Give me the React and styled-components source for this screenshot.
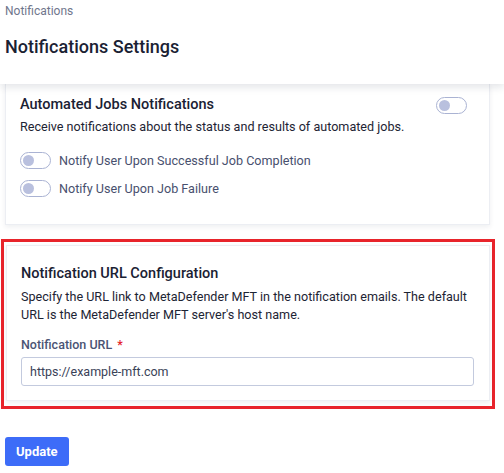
import React, { useState } from 'react';
import styled, { createGlobalStyle } from 'styled-components';

const GlobalStyle = createGlobalStyle`
  body {
    margin: 0;
    background: #ffffff;
    font-family: Roboto, 'Liberation Sans', Arial, sans-serif;
    color: #1d2434;
  }
  * { box-sizing: border-box; }
`;

const Page = styled.div`
  width: 504px;
  height: 473px;
  overflow: hidden;
  background: #ffffff;
`;

const Header = styled.header`
  position: relative;
  z-index: 2;
  height: 84px;
  padding: 3px 5px 0;
  background: #ffffff;
  box-shadow: 0 3px 8px rgba(20, 30, 60, 0.12);
`;

const Breadcrumb = styled.div`
  font-size: 12px;
  line-height: 16px;
  color: #6f768c;
`;

const Title = styled.h1`
  margin: 16px 0 0;
  font-size: 18px;
  line-height: 24px;
  font-weight: 500;
  color: #1a2133;
`;

const Main = styled.main`
  padding: 0 14px 0 5px;
`;

const Card = styled.section`
  background: #ffffff;
  border: 1px solid #eceef3;
  border-top: ${(p) => (p.$cut ? 'none' : '1px solid #eceef3')};
  box-shadow: 0 2px 5px rgba(20, 30, 60, 0.07);
  padding: ${(p) => (p.$cut ? '11px 22px 26px 14px' : '18px 12px 14px 14px')};
`;

const Highlight = styled.div`
  margin: 14px -5px 0 -4px;
  border: 3px solid #e8242b;
  padding: 3px 2px 5px 2px;
`;

const CardHead = styled.div`
  display: flex;
  align-items: center;
  justify-content: space-between;
`;

const CardTitle = styled.h2`
  margin: 0;
  font-size: 14.5px;
  line-height: 20px;
  font-weight: 500;
  color: #1a2133;
`;

const Text = styled.p`
  margin: ${(p) => p.$gap || 4}px 0 0;
  font-size: 12.6px;
  line-height: 18.5px;
  color: #1d2434;
`;

const ToggleList = styled.div`
  display: flex;
  flex-direction: column;
  gap: 10px;
  margin-top: 15px;
`;

const ToggleRow = styled.label`
  display: flex;
  align-items: center;
  gap: 8px;
  font-size: 12.6px;
  line-height: 18px;
  color: #48506e;
  cursor: pointer;
`;

const Track = styled.button`
  position: relative;
  width: 31px;
  height: 17px;
  padding: 0;
  border: 1px solid #aab3d3;
  border-radius: 9px;
  background: ${(p) => (p.$on ? '#3f6cf6' : '#ffffff')};
  cursor: pointer;
  flex-shrink: 0;
`;

const Knob = styled.span`
  position: absolute;
  top: 2px;
  left: ${(p) => (p.$on ? '16px' : '2px')};
  width: 11px;
  height: 11px;
  border-radius: 50%;
  background: ${(p) => (p.$on ? '#ffffff' : '#b9c0de')};
`;

const FieldLabel = styled.div`
  margin-top: 12px;
  font-size: 12.5px;
  line-height: 16px;
  font-weight: 500;
  color: #4b5474;
`;

const Required = styled.span`
  color: #e4232a;
  margin-left: 5px;
`;

const Input = styled.input`
  display: block;
  width: calc(100% - 3px);
  height: 29px;
  margin-top: 4px;
  padding: 0 8px;
  border: 1px solid #c3cade;
  border-radius: 3px;
  font-family: inherit;
  font-size: 12.5px;
  color: #3a4258;
  outline: none;
`;

const Footer = styled.div`
  padding: 28px 5px 0;
`;

const Button = styled.button`
  height: 29px;
  padding: 0 11px;
  border: none;
  border-radius: 3px;
  background: #3d6cf8;
  color: #ffffff;
  font-family: inherit;
  font-size: 13px;
  font-weight: 700;
  cursor: pointer;
`;

const Toggle = ({ on, onClick }) => (
  <Track type="button" $on={on} onClick={onClick}>
    <Knob $on={on} />
  </Track>
);

const App = () => {
  const [toggles, setToggles] = useState({ all: false, success: false, failure: false });
  const [url, setUrl] = useState('https://example-mft.com');

  const flip = (key) => setToggles({ ...toggles, [key]: !toggles[key] });

  return (
    <Page>
      <GlobalStyle />
      <Header>
        <Breadcrumb>Notifications</Breadcrumb>
        <Title>Notifications Settings</Title>
      </Header>
      <Main>
        <Card $cut>
          <CardHead>
            <CardTitle>Automated Jobs Notifications</CardTitle>
            <Toggle on={toggles.all} onClick={() => flip('all')} />
          </CardHead>
          <Text $gap={3}>Receive notifications about the status and results of automated jobs.</Text>
          <ToggleList>
            <ToggleRow>
              <Toggle on={toggles.success} onClick={() => flip('success')} />
              Notify User Upon Successful Job Completion
            </ToggleRow>
            <ToggleRow>
              <Toggle on={toggles.failure} onClick={() => flip('failure')} />
              Notify User Upon Job Failure
            </ToggleRow>
          </ToggleList>
        </Card>
        <Highlight>
          <Card>
            <CardTitle>Notification URL Configuration</CardTitle>
            <Text $gap={4}>
              Specify the URL link to MetaDefender MFT in the notification emails. The default
              URL is the MetaDefender MFT server's host name.
            </Text>
            <FieldLabel>
              Notification URL<Required>*</Required>
            </FieldLabel>
            <Input value={url} onChange={(e) => setUrl(e.target.value)} />
          </Card>
        </Highlight>
      </Main>
      <Footer>
        <Button type="button">Update</Button>
      </Footer>
    </Page>
  );
};

export default App;
